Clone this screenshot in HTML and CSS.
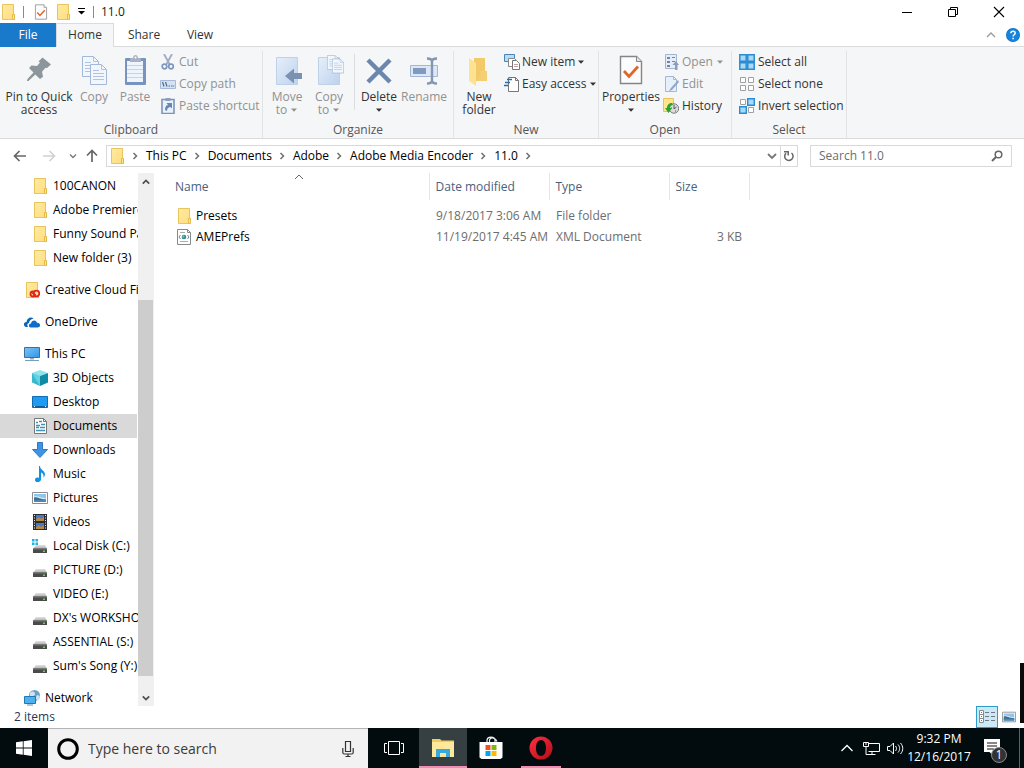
FILE: index.html
```html
<!DOCTYPE html>
<html lang="en">
<head>
<meta charset="utf-8">
<title>11.0</title>
<link rel="stylesheet" href="styles.css">
</head>
<body>
<svg class="defs" aria-hidden="true">
  <linearGradient id="g-folder" x1="0" y1="0" x2="1" y2="1"><stop offset="0" stop-color="#ffeba3"/><stop offset="1" stop-color="#ffdc7c"/></linearGradient>
  <linearGradient id="g-screen" x1="0" y1="0" x2="1" y2="1"><stop offset="0" stop-color="#7cc4f5"/><stop offset="1" stop-color="#2f95e8"/></linearGradient>
  <linearGradient id="g-drive" x1="0" y1="0" x2="0" y2="1"><stop offset="0" stop-color="#e2e2e2"/><stop offset="1" stop-color="#a8a8a8"/></linearGradient>
  <linearGradient id="g-blue" x1="0" y1="0" x2="1" y2="1"><stop offset="0" stop-color="#e6effa"/><stop offset="1" stop-color="#bdd2ee"/></linearGradient>
  <linearGradient id="g-opera" x1="0" y1="0" x2="1" y2="1"><stop offset="0" stop-color="#ff3040"/><stop offset="1" stop-color="#b00c18"/></linearGradient>
  <symbol id="folder" viewBox="0 0 16 16"><path d="M2.500.5h11v10h1v5h-12z" fill="url(#g-folder)" stroke="#e8c45c"/><path d="M12.500 15.500v-5h2v5z" fill="#ffe690" stroke="#e3bb4c"/></symbol>
  <symbol id="drive" viewBox="0 0 16 16"><path d="M4 7h9l2 4H1z" fill="url(#g-drive)"/><path d="M1 10.500h14v4.500H1z" fill="#4a4a4a"/><path d="M1 10.500h14v1H1z" fill="#777"/><path d="M11 12.500h2v1.500h-2z" fill="#4be04b"/></symbol>
  <symbol id="check" viewBox="0 0 24 30"><path d="M1.500 1.500h16l5 5v22h-21z" fill="#fbfcfd" stroke="#858585" stroke-width="1.400"/><path d="M17.500 1.500v5h5" fill="#e4e4e4" stroke="#858585"/><path d="M5 16l5 5.500 9-10" fill="none" stroke="#e2662c" stroke-width="2.800"/></symbol>
  <symbol id="doc" viewBox="0 0 17 21"><path d="M.5.5h11l5 5v15H.5z" fill="#f2f7fd" stroke="#a3b9da"/><path d="M11.500.5v5h5M3 6.500h6M3 9.500h11M3 12.500h11M3 15.500h11" fill="none" stroke="#b0c4e2"/></symbol>
  <symbol id="picture" viewBox="0 0 16 16"><path d="M.5 2.500h15v11H.5z" fill="#fff" stroke="#8d8d8d"/><path d="M2 4h12v8H2z" fill="#8fc4ee"/><path d="M2 6.500c4-1 5 1 12 2v1H2z" fill="#e2f0fb"/><path d="M2 7.500c3-1 5 1.500 12 2V12H2z" fill="#3f6f8f"/><path d="M2 10h12v2H2z" fill="#4f86b8"/></symbol>
  <symbol id="chev-r" viewBox="0 0 6 8"><path d="M1.500 1l3 3-3 3" fill="none" stroke="#707070" stroke-width="1.500"/></symbol>
  <symbol id="caret" viewBox="0 0 8 8"><path d="M1 2.500h6l-3 3.300z" fill="currentColor"/></symbol>
</svg>

<header class="titlebar">
  <svg class="i16"><use href="#folder"/></svg>
  <span class="tb-sep"></span>
  <button class="qa" aria-label="Properties"><svg class="i16"><use href="#check"/></svg></button>
  <button class="qa" aria-label="New folder"><svg class="i16"><use href="#folder"/></svg></button>
  <button class="qa small" aria-label="Customize toolbar"><svg viewBox="0 0 9 9" class="i9"><path d="M1 1.500h7" stroke="#000"/><path d="M1 4h7L4.500 7.500z"/></svg></button>
  <span class="tb-sep slim"></span>
  <h1 class="title">11.0</h1>
  <div class="win-buttons">
    <button aria-label="Minimize"><svg viewBox="0 0 12 12" class="i12"><path d="M1 6.500h10" stroke="#000"/></svg></button>
    <button aria-label="Restore"><svg viewBox="0 0 12 12" class="i12"><path d="M1.500 3.500h7v7h-7zM3.500 3.500v-2h7v7h-2" fill="none" stroke="#000"/></svg></button>
    <button aria-label="Close"><svg viewBox="0 0 12 12" class="i12"><path d="M1 1l10 10M11 1L1 11" stroke="#000" stroke-width="1.100"/></svg></button>
  </div>
</header>

<nav class="tabs">
  <button class="tab file">File</button>
  <button class="tab active">Home</button>
  <button class="tab">Share</button>
  <button class="tab">View</button>
  <span class="grow"></span>
  <button class="mini" aria-label="Collapse ribbon"><svg viewBox="0 0 10 10" class="i10"><path d="M1 7l4-4 4 4" fill="none" stroke="#9a9a9a" stroke-width="1.300"/></svg></button>
  <button class="mini" aria-label="Help"><svg viewBox="0 0 14 14" class="i14"><circle cx="7" cy="7" r="7" fill="#0b6fc4"/><circle cx="7" cy="7" r="6.300" fill="#1683dc"/><path d="M4.900 5.300c0-2.800 4.300-2.700 4.300-.2 0 1.700-2.100 1.600-2.100 3.400M7.100 9.700v1.600" fill="none" stroke="#fff" stroke-width="1.500"/></svg></button>
</nav>

<section class="ribbon">
  <div class="group clipboard">
    <div class="tools">
      <button class="big wide"><svg viewBox="0 0 32 32"><path d="M16.500 8.500l4-4 8.500 7-4 3.500-1.500-.3-3.500 4 1 5-3 2.300-4.700-4.500L6.500 28 5 28l.5-2 6-6.500L7 15l2.500-2.500 5.500.5 3-3.500z" transform="translate(-1 -1)" fill="#8d969b"/></svg><span>Pin to Quick<br>access</span></button>
      <button class="big copy" disabled><svg viewBox="0 0 32 32"><use href="#doc" x="4" y="2" width="17" height="21"/><use href="#doc" x="12" y="10" width="17" height="21"/></svg><span>Copy</span></button>
      <button class="big paste" disabled><svg viewBox="0 0 32 32"><rect x="6" y="4" width="21" height="27" rx="1" fill="#7993bf"/><path d="M8 7h16v21H8z" fill="#eef4fc"/><path d="M8 11.500h16M8 15.500h16M8 19.500h16M8 23.500h16" stroke="#c3d4ec"/><path d="M11 4h3c0-4 5-4 5 0h3v4H11z" fill="#a7b3c4"/><circle cx="16.500" cy="3.500" r="1" fill="#fff"/></svg><span>Paste</span></button>
      <div class="stack">
        <button disabled><svg viewBox="0 0 16 16"><path d="M4 0l6 11M12 0L6 11" stroke="#9dacc3" stroke-width="1.800"/><circle cx="4.500" cy="12.500" r="2.300" fill="none" stroke="#7f96bf" stroke-width="1.700"/><circle cx="11" cy="12.500" r="2.300" fill="none" stroke="#7f96bf" stroke-width="1.700"/></svg>Cut</button>
        <button disabled><svg viewBox="0 0 16 16"><path d="M.5 4.500h15v8H.5z" fill="#d4e2f3" stroke="#a6bad8"/><path d="M2.500 6l1.500 4.500M5.500 6L7 10.500M8.500 10h1.500M11 10h1.500M13.200 10h1" stroke="#506a91" stroke-width="1.200"/></svg>Copy path</button>
        <button disabled><svg viewBox="0 0 16 16"><path d="M2 1.500h12v14H2z" fill="#e9f1fb" stroke="#7c94bd" stroke-width="1.600"/><path d="M5.500 0h5v3h-5z" fill="#8c9fbd"/><path d="M5 12c0-3 1-4.500 3-5L6.500 5H12v5.500l-1.500-1.500C8 9.500 7.500 10 7 13z" fill="#6a84b3"/></svg>Paste shortcut</button>
      </div>
    </div>
    <h2>Clipboard</h2>
  </div>
  <div class="group organize">
    <div class="tools">
      <button class="big move" disabled><svg viewBox="0 0 32 32"><path d="M5.500 3.500h21v27h-21z" fill="url(#g-blue)" stroke="#bfd0e8"/><path d="M31 19v6h-8v4.500L14 22l9-7.500V19z" fill="#7b91b0"/></svg><span>Move<br>to <svg class="caret"><use href="#caret"/></svg></span></button>
      <button class="big copyto" disabled><svg viewBox="0 0 32 32"><path d="M5.500 3.500h21v27h-21z" fill="url(#g-blue)" stroke="#bfd0e8"/><use href="#doc" x="14" y="1" width="12" height="15"/><use href="#doc" x="19" y="4" width="12" height="16"/></svg><span>Copy<br>to <svg class="caret"><use href="#caret"/></svg></span></button>
      <span class="tool-sep"></span>
      <button class="big delete"><svg viewBox="0 0 32 32"><path d="M5 6l22 22M27 6L5 28" stroke="#6c87ad" stroke-width="4.500"/></svg><span>Delete<br><svg class="caret"><use href="#caret"/></svg></span></button>
      <button class="big rename" disabled><svg viewBox="0 0 32 32"><path d="M2.500 11.500h27v11h-27z" fill="#dce8f6" stroke="#a3b7d5"/><path d="M5 14h13v6H5z" fill="#7f99c0"/><path d="M19 4.500c3 0 5 .5 5 3v19c0 2-2 3-5 3M29 4.500c-3 0-5 .5-5 3M24 26.500c0 2 2 3 5 3" fill="none" stroke="#8396b2" stroke-width="2.400"/></svg><span>Rename</span></button>
    </div>
    <h2>Organize</h2>
  </div>
  <div class="group new">
    <div class="tools">
      <button class="big newfolder"><svg viewBox="0 0 32 32"><path d="M11 4h11v23H11z" fill="#f2ca68"/><path d="M18 17h6v10h-9z" fill="#f5cf74"/><path d="M6 4l7 5v23l-7-5z" fill="#ffe192"/></svg><span>New<br>folder</span></button>
      <div class="stack">
        <button><svg viewBox="0 0 16 16"><path d="M.5.5h10v7H.5z" fill="#b9dcf4" stroke="#4685b8"/><path d="M4.500 4.500h6l2 2v6h-8z" fill="#fff" stroke="#888"/><path d="M8.500 6.500h4l3 3v6h-7z" fill="#fff" stroke="#777"/><path d="M10 10.500h4M10 12.500h4" stroke="#c4a0a0"/></svg>New item<svg class="caret"><use href="#caret"/></svg></button>
        <button><svg viewBox="0 0 16 16"><path d="M4.500 1.500h7l3 3v11h-10z" fill="#fff" stroke="#777"/><path d="M11.500 1.500v3h3" fill="none" stroke="#777"/><path d="M3 3.500h5M1 6.500h5M0 9.500h4" stroke="#1e6fb5" stroke-width="1.400"/></svg>Easy access<svg class="caret"><use href="#caret"/></svg></button>
      </div>
    </div>
    <h2>New</h2>
  </div>
  <div class="group open">
    <div class="tools">
      <button class="big props"><svg viewBox="0 0 32 32"><use href="#check" x="4" y="1" width="24" height="30"/></svg><span>Properties<br><svg class="caret"><use href="#caret"/></svg></span></button>
      <div class="stack">
        <button disabled><svg viewBox="0 0 16 16"><path d="M2.500.5h11v14h-11z" fill="#e4edf8" stroke="#a2b4d0"/><path d="M4 3h3v2H4zM4 7h3v2H4zM4 11h3v2H4zM9 3h3v1H9zM9 7h3v1H9z" fill="#6f87b0"/><path d="M12 16V11H9.500L13 7l3 4h-1.500v5z" fill="#8c9dbb"/></svg>Open<svg class="caret"><use href="#caret"/></svg></button>
        <button disabled><svg viewBox="0 0 16 16"><path d="M2.500.5h8l3 3v12h-11z" fill="#e6effa" stroke="#a2b8d8"/><path d="M10.500.5v3h3" fill="none" stroke="#a2b8d8"/><path d="M15 4L7.500 12.500 6 15l3-1L16 6z" fill="#91a7ca"/></svg>Edit</button>
        <button><svg viewBox="0 0 16 16"><path d="M.5.5h10v13H.5z" fill="#ffe58c" stroke="#e6c35a"/><circle cx="11" cy="10.500" r="4.700" fill="#ddd" stroke="#777"/><path d="M11 7v4l2.500-2M8 10h1M12 13h1" fill="none" stroke="#555"/><path d="M9 5c-3 0-5 2-5 5H2l3.500 5L9 10H7c0-2 1-3 3-3z" fill="#27a52c"/></svg>History</button>
      </div>
    </div>
    <h2>Open</h2>
  </div>
  <div class="group select">
    <div class="tools">
      <div class="stack">
        <button><svg viewBox="0 0 16 16"><path d="M.8.8h6.400v6.400H.8zM8.800.8h6.400v6.400H8.800zM.8 8.800h6.400v6.400H.8zM8.800 8.800h6.400v6.400H8.800z" fill="#a9d9f8" stroke="#2b8bd0" stroke-width="1.500"/></svg>Select all</button>
        <button><svg viewBox="0 0 16 16"><path d="M1.500 1.500h5v5h-5zM9.500 1.500h5v5h-5zM1.500 9.500h5v5h-5zM9.500 9.500h5v5h-5z" fill="#fff" stroke="#a0a0a0"/></svg>Select none</button>
        <button><svg viewBox="0 0 16 16"><path d="M1.500 1.500h5v5h-5zM9.500 9.500h5v5h-5z" fill="#fff" stroke="#a0a0a0"/><path d="M8.700.7h6.600v6.600H8.700zM.7 8.700h6.600v6.600H.7z" fill="#a9d9f8" stroke="#2b8bd0" stroke-width="1.400"/></svg>Invert selection</button>
      </div>
    </div>
    <h2>Select</h2>
  </div>
</section>

<div class="address-row">
  <div class="nav-buttons">
    <button aria-label="Back"><svg viewBox="0 0 14 14" class="i14"><path d="M13 7H2M6.500 2L1.500 7l5 5" fill="none" stroke="#666" stroke-width="1.700"/></svg></button>
    <button aria-label="Forward" disabled><svg viewBox="0 0 14 14" class="i14"><path d="M1 7h11M7.500 2l5 5-5 5" fill="none" stroke="#d2d2d2" stroke-width="1.700"/></svg></button>
    <button aria-label="Recent locations" class="slim"><svg viewBox="0 0 8 8" class="i8"><path d="M1 2.500l3 3 3-3" fill="none" stroke="#777" stroke-width="1.300"/></svg></button>
    <button aria-label="Up" class="slim"><svg viewBox="0 0 14 14" class="i14"><path d="M7 13V2M2 6.500l5-5 5 5" fill="none" stroke="#666" stroke-width="1.700"/></svg></button>
  </div>
  <div class="address">
    <svg class="i16"><use href="#folder"/></svg>
    <svg class="chev"><use href="#chev-r"/></svg><button>This PC</button>
    <svg class="chev"><use href="#chev-r"/></svg><button>Documents</button>
    <svg class="chev"><use href="#chev-r"/></svg><button>Adobe</button>
    <svg class="chev"><use href="#chev-r"/></svg><button>Adobe Media Encoder</button>
    <svg class="chev"><use href="#chev-r"/></svg><button>11.0</button>
    <svg class="chev"><use href="#chev-r"/></svg>
    <span class="grow"></span>
    <button class="addr-end" aria-label="Previous locations"><svg viewBox="0 0 10 10" class="i10"><path d="M1 3l4 4 4-4" fill="none" stroke="#777" stroke-width="1.800"/></svg></button>
    <button class="addr-end refresh" aria-label="Refresh"><svg viewBox="0 0 12 12" class="i12"><path d="M3 3.200A4.200 4.200 0 1 0 8.500 3M1 1.800h4.200V5.500" fill="none" stroke="#666" stroke-width="1.500"/></svg></button>
  </div>
  <label class="search"><input type="text" placeholder="Search 11.0" aria-label="Search 11.0"><svg viewBox="0 0 12 12" class="i12"><circle cx="7.500" cy="4.500" r="3.300" fill="none" stroke="#666" stroke-width="1.500"/><path d="M5 7L1 11" stroke="#666" stroke-width="2"/></svg></label>
</div>

<main class="main">
  <nav class="tree">
    <ul>
      <li class="sub"><svg class="i16"><use href="#folder"/></svg>100CANON</li>
      <li class="sub"><svg class="i16"><use href="#folder"/></svg>Adobe Premiere</li>
      <li class="sub"><svg class="i16"><use href="#folder"/></svg>Funny Sound Pa</li>
      <li class="sub"><svg class="i16"><use href="#folder"/></svg>New folder (3)</li>
    </ul>
    <ul>
      <li><svg class="i16" viewBox="0 0 16 16"><use href="#folder" width="16" height="16"/><circle cx="9" cy="12" r="2.500" fill="#f8d9a0" stroke="#e0251b" stroke-width="1.800"/><circle cx="12.500" cy="11.500" r="2.800" fill="#f8d9a0" stroke="#e0251b" stroke-width="1.800"/><path d="M8 11.500c1.500-1 2.500 1.500 4 1.500" fill="none" stroke="#e0251b" stroke-width="1.400"/></svg>Creative Cloud Fil</li>
    </ul>
    <ul>
      <li><svg class="i16" viewBox="0 0 16 16"><path d="M3 13c-4 0-4-5-.5-5C3 4 7 2.500 9.500 4.500 6.500 5 5.300 7 5 9c-2 .5-2 2.500-1 4z" fill="#0a66b8"/><path d="M6.500 13.500c-2.500-.5-2-4 .5-4C7.500 6 12 5.500 13 8.800c4 0 4 4.700.5 4.700z" fill="#0c6fca"/></svg>OneDrive</li>
    </ul>
    <ul>
      <li><svg class="i16" viewBox="0 0 16 16"><path d="M.5 1.500h15v10H.5z" fill="url(#g-screen)" stroke="#3c6f9c"/><path d="M6 12h4v1.500H6z" fill="#9ab"/><path d="M1 14.500h14" stroke="#789db8"/></svg>This PC</li>
      <li class="sub"><svg class="i16" viewBox="0 0 16 16"><path d="M0 3l8-3 8 3-8 3z" fill="#8de3ee"/><path d="M0 3l8 3v10l-8-3.500z" fill="#38b9cf"/><path d="M16 3L8 6v10l8-3.500z" fill="#108ba6"/><path d="M0 3l8 3v10z" fill="#65d1e0"/></svg>3D Objects</li>
      <li class="sub"><svg class="i16" viewBox="0 0 16 16"><path d="M.5 2.500h15v11H.5z" fill="#1e9bf0" stroke="#116bb0"/><path d="M1 12h14v1.500H1z" fill="#0b5c9c"/><path d="M2 12.500h1M13 12.500h1" stroke="#fff"/></svg>Desktop</li>
      <li class="sub selected"><svg class="i16" viewBox="0 0 16 16"><path d="M2.500.5h9l3 3v12h-12z" fill="#fff" stroke="#777"/><path d="M11.500.5v3h3" fill="none" stroke="#777"/><path d="M4 4.500h2M7 3.500h3M9 6.500h4M4 9.500h3M8 9.500h5M4 12.500h9M4 7.500h4" stroke="#3f93b4" stroke-width="1.300"/></svg>Documents</li>
      <li class="sub"><svg class="i16" viewBox="0 0 16 16"><path d="M5.500.5h5v7h5L8 15.500.5 7.500h5z" fill="#3e94e4" stroke="#3177c0"/></svg>Downloads</li>
      <li class="sub"><svg class="i16" viewBox="0 0 16 16"><path d="M8 0c0 4 5 4 5 9l-1.500 3c.5-4-1-5-2.500-5.500V13c0 4-6 4-6 1 0-2.500 2.500-3 4-2V0z" fill="#1291e2"/></svg>Music</li>
      <li class="sub"><svg class="i16"><use href="#picture"/></svg>Pictures</li>
      <li class="sub"><svg class="i16" viewBox="0 0 16 16"><path d="M1 0h14v16H1z" fill="#2c2c34"/><path d="M4 1h8v6H4zM4 9h8v6H4z" fill="#4c79bd"/><path d="M4 5l3-2 2 2 3-2v4H4zM4 13l3-2 2 2 3-2v4H4z" fill="#b48a3c"/><path d="M2.500 1v15M13.500 1v15" stroke="#eee" stroke-dasharray="1 1.500"/></svg>Videos</li>
      <li class="sub"><svg class="i16" viewBox="0 0 16 16"><use href="#drive" width="16" height="16"/><path d="M0 1h2.500v2.500H0zM3.500 1H6v2.500H3.500zM0 4.500h2.500V7H0zM3.500 4.500H6V7H3.500z" fill="#1cb2e4"/></svg>Local Disk (C:)</li>
      <li class="sub"><svg class="i16"><use href="#drive"/></svg>PICTURE (D:)</li>
      <li class="sub"><svg class="i16"><use href="#drive"/></svg>VIDEO (E:)</li>
      <li class="sub"><svg class="i16"><use href="#drive"/></svg>DX's WORKSHO</li>
      <li class="sub"><svg class="i16"><use href="#drive"/></svg>ASSENTIAL (S:)</li>
      <li class="sub"><svg class="i16"><use href="#drive"/></svg>Sum's Song (Y:)</li>
    </ul>
    <ul>
      <li><svg class="i16" viewBox="0 0 16 16"><circle cx="10.500" cy="5.500" r="5.500" fill="#6f9fc6"/><path d="M6 3c3-3 5-1 5 1S8 7 6 7zM13 5l3 1-2 4-3-1z" fill="#cfe3f1"/><path d="M.5 6.500h11v7H.5z" fill="#4eb0ee" stroke="#1f77b4"/><path d="M3 15h6" stroke="#5b8fb5"/></svg>Network</li>
    </ul>
  </nav>
  <div class="scrollbar">
    <button aria-label="Scroll up"><svg viewBox="0 0 10 10" class="i8"><path d="M1 7l4-4 4 4" fill="none" stroke="#505050" stroke-width="2.200"/></svg></button>
    <div class="track"><div class="thumb"></div></div>
    <button aria-label="Scroll down"><svg viewBox="0 0 10 10" class="i8"><path d="M1 3l4 4 4-4" fill="none" stroke="#505050" stroke-width="2.200"/></svg></button>
  </div>
  <section class="files">
    <table>
      <colgroup><col class="c-name"><col class="c-date"><col class="c-type"><col class="c-size"></colgroup>
      <thead><tr><th class="sorted">Name<svg viewBox="0 0 10 6" class="sort"><path d="M1 5l4-4 4 4" fill="none" stroke="#666"/></svg></th><th>Date modified</th><th>Type</th><th>Size</th></tr></thead>
      <tbody>
        <tr><td><div class="name"><svg class="i16"><use href="#folder"/></svg>Presets</div></td><td>9/18/2017 3:06 AM</td><td>File folder</td><td class="num"></td></tr>
        <tr><td><div class="name"><svg class="i16" viewBox="0 0 16 16"><path d="M1.500.5h10l3 3v12h-13z" fill="#fff" stroke="#888"/><path d="M11.500.5v3h3" fill="none" stroke="#888"/><path d="M4 3.500h5M4 12.500h8" stroke="#aaa"/><path d="M4.500 6L3 8l1.500 2M11.500 6L13 8l-1.500 2" fill="none" stroke="#6b8aa5"/><circle cx="8" cy="8" r="2.300" fill="#2f8d9d"/><circle cx="7.500" cy="7.500" r="1" fill="#8ed46a"/></svg>AMEPrefs</div></td><td>11/19/2017 4:45 AM</td><td>XML Document</td><td class="num">3 KB</td></tr>
      </tbody>
    </table>
  </section>
</main>

<footer class="status">
  <span class="count">2 items</span>
  <span class="grow"></span>
  <button class="view on" aria-label="Details view"><svg viewBox="0 0 16 16" class="i16"><path d="M.5 1.500h4v12h-4zM.5 5.500h4M.5 9.500h4" fill="#fff" stroke="#8a8a8a"/><path d="M2 3.500h1M2 7.500h1M2 11.500h1M6 3.500h4M12 3.500h4M6 7.500h4M12 7.500h4M6 11.500h4M12 11.500h4" stroke="#6f7a80"/></svg></button>
  <button class="view" aria-label="Large icons view"><svg class="i14"><use href="#picture"/></svg></button>
</footer>

<div class="edge-panel"></div>

<div class="taskbar">
  <button class="start" aria-label="Start"><svg viewBox="0 0 16 16" class="i16"><path d="M0 2.300l6.800-1V7.600H0zM7.600 1.200L16 0v7.600H7.600zM0 8.400h6.800v6.300l-6.800-1zM7.600 8.400H16V16l-8.400-1.200z" fill="#fff"/></svg></button>
  <label class="cortana"><svg viewBox="0 0 24 24" class="i24"><circle cx="12" cy="12" r="9.300" fill="none" stroke="#000" stroke-width="3"/></svg><input type="text" placeholder="Type here to search" aria-label="Type here to search"><svg viewBox="0 0 12 18" class="mic"><path d="M3.500 1.500h5v10h-5zM.8 8v4.500c0 1 .5 1.500 1.500 1.500h7.400c1 0 1.500-.5 1.500-1.500V8M6 14v2.500M3.500 16.500h5" fill="none" stroke="#333" stroke-width="1.200"/></svg></label>
  <button class="task" aria-label="Task view"><svg viewBox="0 0 20 16" class="tv"><path d="M4.500 1.500h11v13h-11zM3 3.500H.5v9H3M17 3.500h2.500v9H17" fill="none" stroke="#fff"/></svg></button>
  <button class="task current" aria-label="File Explorer"><svg viewBox="0 0 22 20" class="fe"><path d="M0 1h8l1.500 1.500H22V19H0z" fill="#f2cc5b"/><path d="M0 4h22v15H0z" fill="#ffe79b"/><path d="M4 11h14v8h-4v-4H8v4H4z" fill="#36a9dd"/></svg></button>
  <button class="task" aria-label="Store"><svg viewBox="0 0 24 24" class="i24"><path d="M8 8V4.500C8 0 16 0 16 4.500V8M10.500 7V4.500c0-4 6-3 7.500 1" fill="none" stroke="#eee" stroke-width="1.200"/><path d="M.5 6h23v15.500l-2 1.500h-19l-2-1.500z" fill="#fff"/><path d="M6.500 9h5v5h-5z" fill="#f25022"/><path d="M12.500 9h5v5h-5z" fill="#7fba00"/><path d="M6.500 15h5v5h-5z" fill="#00a4ef"/><path d="M12.500 15h5v5h-5z" fill="#ffb900"/></svg></button>
  <button class="task running" aria-label="Opera"><svg viewBox="0 0 24 24" class="i24"><path fill-rule="evenodd" d="M12 .5a11.500 11.500 0 1 0 0 23 11.500 11.500 0 1 0 0-23zM12 4c3 0 5 3 5 8s-2 8-5 8-5-3-5-8 2-8 5-8z" fill="url(#g-opera)"/></svg></button>
  <span class="grow"></span>
  <button class="tray" aria-label="Show hidden icons"><svg viewBox="0 0 12 12" class="i12"><path d="M.5 9L6 3.500 11.500 9" fill="none" stroke="#fff" stroke-width="1.300"/></svg></button>
  <button class="tray" aria-label="Network"><svg viewBox="0 0 17 15" class="net"><path d="M5.500 2.500h11v8h-11M5.500 13.500h7M9 10.500v3M.5 1.500h5v4h-5zM3 5.500v8h4M2 3h2" fill="none" stroke="#fff"/></svg></button>
  <button class="tray" aria-label="Volume"><svg viewBox="0 0 17 15" class="net"><path d="M.5 5.500H3l3.500-3.500v11L3 9.500H.5zM8.500 5c1.300 1.500 1.300 3.500 0 5M11 3.500c2.200 2.500 2.200 5.500 0 8M13.500 2c3 3.500 3 7.500 0 11" fill="none" stroke="#fff"/></svg></button>
  <div class="clock"><span>9:32 PM</span><span>12/16/2017</span></div>
  <button class="notify" aria-label="Notifications"><svg viewBox="0 0 18 18" class="bell"><path d="M1 0h16v13h-6.500v4L6.500 13H1z" fill="#fff"/><path d="M4 4h10M4 7h10M4 10h7" stroke="#111"/></svg><span class="badge">1</span></button>
  <span class="peek"></span>
</div>
</body>
</html>
```
FILE: styles.css
```css
* { box-sizing: border-box; }

body {
  margin: 0;
  height: 100vh;
  display: flex;
  flex-direction: column;
  overflow: hidden;
  background: #fff;
  color: #1a1a1a;
  font: 12px/16px "Open Sans", "Noto Sans", sans-serif;
}

button {
  margin: 0;
  padding: 0;
  border: 0;
  background: none;
  color: inherit;
  font: inherit;
}

input {
  min-width: 0;
  border: 0;
  padding: 0;
  outline: 0;
  background: none;
  font: inherit;
}

input::placeholder { color: #6d6d6d; opacity: 1; }

h1, h2 { margin: 0; font: inherit; }
svg { display: block; flex: none; }
.grow { flex: 1; }
.defs { position: absolute; width: 0; height: 0; }
.i8 { width: 8px; height: 8px; }
.i9 { width: 9px; height: 9px; }
.i10 { width: 10px; height: 10px; }
.i12 { width: 12px; height: 12px; }
.i14 { width: 14px; height: 14px; }
.i16 { width: 16px; height: 16px; }
.i24 { width: 24px; height: 24px; }

/* Title bar */
.titlebar { display: flex; align-items: center; height: 23px; flex: none; }
.tb-sep { width: 1px; height: 12px; margin: 0 6px 0 7px; background: #8a8a8a; }
.tb-sep.slim { margin: 0 7px 0 4px; }
.qa { width: 22px; display: grid; place-items: center; }
.qa.small { width: 15px; }
.win-buttons { display: flex; margin-left: auto; align-self: stretch; margin-right: 2px; }
.win-buttons button { width: 46px; display: grid; place-items: center; }

/* Ribbon tabs */
.tabs { display: flex; align-items: center; height: 24px; flex: none; border-bottom: 1px solid #dadbdc; }
.tab { width: 56px; height: 24px; margin-bottom: -1px; padding-bottom: 1px; color: #333; }
.tab.file { background: #1979ca; color: #fff; }
.tab.active { width: 58px; background: #f5f6f7; border: 1px solid #dadbdc; border-bottom: 0; }
.tab:nth-child(3) { width: 60px; }
.tab:nth-child(4) { width: 52px; }
.mini { width: 22px; display: grid; place-items: center; }

/* Ribbon */
.ribbon { display: flex; flex: none; background: #f5f6f7; border-bottom: 1px solid #dadbdc; padding-top: 4px; color: #333; }
.group { display: flex; flex-direction: column; border-right: 1px solid #e2e3e4; }
.group h2 { line-height: 16px; text-align: center; color: #555; }
.tools { display: flex; height: 71px; }
.clipboard { width: 263px; }
.organize { width: 191px; }
.new { width: 145px; }
.open { width: 133px; }
.select { width: 115px; }
.big { display: flex; flex-direction: column; align-items: center; justify-content: flex-start; gap: 4px; padding-top: 3px; line-height: 13px; white-space: nowrap; }
.big > svg { width: 32px; height: 32px; }
.ribbon button:disabled { color: #919191; }
.caret { display: inline-block; width: 8px; height: 8px; }
.big.wide { width: 78px; }
.big.copy { width: 32px; }
.big.paste { width: 50px; }
.big.move, .big.copyto { width: 42px; }
.big.move { margin-left: 3px; }
.tool-sep { width: 1px; height: 56px; margin: 3px 3px 0 4px; background: #dcdddf; }
.big.delete { width: 42px; }
.big.rename { width: 48px; }
.big.newfolder { width: 50px; }
.big.props { width: 64px; }
.stack { display: flex; flex-direction: column; }
.stack button { display: flex; align-items: center; gap: 3px; height: 22px; white-space: nowrap; }
.stack button > svg:first-child { width: 16px; height: 16px; }
.new .stack button { gap: 2px; }
.select .stack { margin-left: 7px; }

/* Address row */
.address-row { display: flex; align-items: center; flex: none; height: 34px; padding-right: 12px; }
.nav-buttons { display: flex; width: 106px; padding-left: 5px; }
.nav-buttons button { width: 29px; display: grid; place-items: center; }
.nav-buttons .slim { width: 19px; }
.address { display: flex; align-items: center; flex: 1; height: 22px; border: 1px solid #d9d9d9; padding-left: 2px; color: #000; }
.address .chev { width: 6px; height: 8px; margin: 0 8px 0 7px; }
.addr-end { width: 17px; height: 20px; display: grid; place-items: center; }
.addr-end.refresh { border-left: 1px solid #d9d9d9; }
.search { display: flex; align-items: center; width: 202px; height: 22px; margin-left: 12px; padding: 0 8px; border: 1px solid #d9d9d9; }
.search input { flex: 1; }

/* Main area */
.main { display: flex; flex: 1; min-height: 0; color: #000; }
.tree { width: 138px; padding-top: 1px; overflow: hidden; }
.tree ul { margin: 0 0 8px; padding: 0; list-style: none; }
.tree li { display: flex; align-items: center; gap: 5px; height: 24px; margin-right: 1px; padding-left: 24px; white-space: nowrap; }
.tree li.sub { padding-left: 32px; }
.tree li.selected { background: #d9d9d9; }
.scrollbar { display: flex; flex-direction: column; width: 16px; background: #f0f0f0; }
.scrollbar button { height: 17px; display: grid; place-items: center; }
.track { flex: 1; display: flex; flex-direction: column; padding: 110px 1px 13px 0; }
.thumb { flex: 1; background: #cdcdcd; }
.files { flex: 1; padding-left: 13px; margin-left: 2px; }
.files table { table-layout: fixed; width: 580px; border-collapse: collapse; }
.c-name { width: 260px; }
.c-date, .c-type { width: 120px; }
.c-size { width: 80px; }
.files th { height: 27px; padding: 0 6px; border-right: 1px solid #e5e5e5; text-align: left; font-weight: 400; color: #4c607a; position: relative; }
.files tbody::before { content: ""; display: block; height: 5px; }
.files td { height: 21px; padding: 0 7px; color: #6d6d6d; white-space: nowrap; }
.files td .name { display: flex; align-items: center; gap: 4px; color: #000; }
.files td.num { text-align: right; }
.sort { position: absolute; top: 1px; left: 125px; width: 10px; height: 6px; }

/* Status bar */
.status { display: flex; align-items: center; flex: none; height: 22px; padding: 0 4px 0 14px; color: #1e395b; }
.view { width: 22px; height: 22px; display: grid; place-items: center; }
.view.on { border: 1px solid #2c9cc8; background: #cce8f6; }
.edge-panel { position: absolute; right: 0; bottom: 45px; width: 4px; height: 60px; background: #0a0a0a; }

/* Taskbar */
.taskbar { display: flex; flex: none; height: 40px; background: #020c0e; color: #fff; }
.start { width: 48px; display: grid; place-items: center; }
.cortana { display: flex; align-items: center; gap: 8px; width: 320px; padding: 0 14px 0 8px; background: #f2f2f2; border-top: 1px solid #b4b4b4; font-size: 14px; line-height: 20px; }
.cortana input { flex: 1; }
.cortana input::placeholder { color: #3b3b3b; }
.mic { width: 12px; height: 18px; }
.task { width: 48px; display: grid; place-items: center; }
.task:nth-child(3) { width: 51px; }
.tv { width: 20px; height: 16px; }
.fe { width: 22px; height: 20px; }
.task.current { background: #364043; border-bottom: 2px solid #ee8cb2; padding-top: 2px; }
.task.running { width: 40px; margin-left: 6px; border-bottom: 2px solid #ee8cb2; padding-top: 2px; }
.tray { width: 24px; display: grid; place-items: center; }
.net { width: 17px; height: 15px; }
.clock { display: flex; flex-direction: column; justify-content: center; width: 64px; line-height: 18px; text-align: center; }
.notify { position: relative; width: 48px; padding-left: 12px; display: flex; align-items: center; }
.bell { width: 18px; height: 18px; }
.badge { position: absolute; left: 20px; top: 19px; width: 16px; height: 16px; border: 1px solid #8a8a8a; border-radius: 50%; background: #333; font-size: 12px; line-height: 14px; text-align: center; }
.peek { width: 5px; border-left: 1px solid #5a6264; }
```
